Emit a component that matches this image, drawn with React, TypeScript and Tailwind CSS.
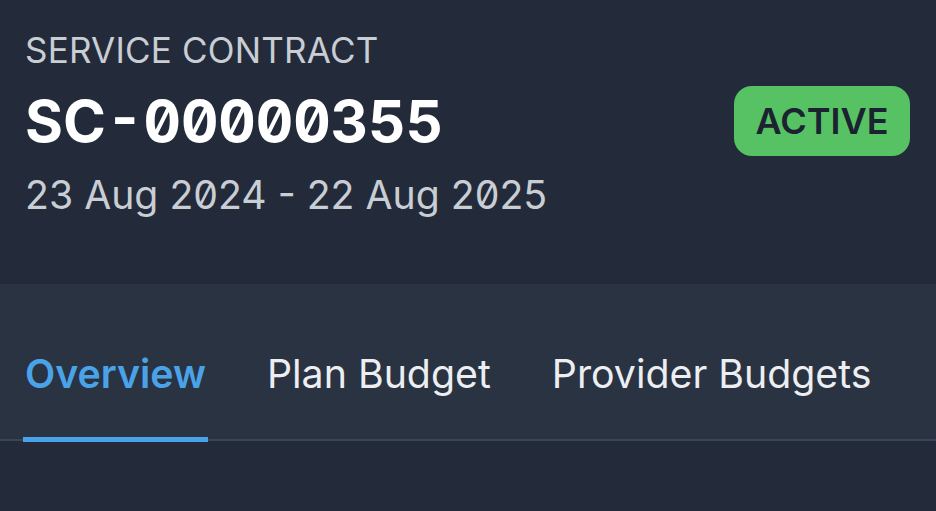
import React from "react";

export default function App() {
  const tabs = ["Overview", "Plan Budget", "Provider Budgets"];
  return (
    <div
      className="w-full h-[511px] bg-[#232b3a] overflow-hidden"
      style={{ fontFamily: "Inter, 'Noto Sans', sans-serif" }}
    >
      <header className="h-[284px] pl-[25px] pr-[26px] pt-[29px]">
        <div className="text-[35px] leading-[42px] text-[#c9cdd4] tracking-[0.2px]">
          SERVICE CONTRACT
        </div>
        <div className="mt-[15px] flex items-center justify-between">
          <h1 className="text-[58px] leading-[70px] font-bold text-white slashed-zero tabular-nums">
            SC-00000355
          </h1>
          <span className="h-[70px] w-[176px] rounded-[18px] bg-[#57c264] flex items-center justify-center text-[36px] font-semibold text-[#1b2230] slashed-zero">
            ACTIVE
          </span>
        </div>
        <div className="mt-[15px] text-[39.2px] leading-[48px] text-[#c9cdd4] slashed-zero">
          23 Aug 2024 - 22 Aug 2025
        </div>
      </header>
      <nav className="bg-[#293342] border-b-2 border-[#3a4556] pt-[67px] pl-[23px] flex gap-[57px]">
        {tabs.map((t, i) => (
          <div
            key={t}
            className={
              i === 0
                ? "px-[2px] pb-[40px] border-b-[5px] border-[#4aa3e8] -mb-[3px] text-[39.3px] leading-[46px] font-semibold text-[#4aa3e8]"
                : "px-[2px] pb-[40px] border-b-[5px] border-transparent -mb-[3px] text-[39.3px] leading-[46px] text-[#eceef1]"
            }
          >
            {t}
          </div>
        ))}
      </nav>
    </div>
  );
}
